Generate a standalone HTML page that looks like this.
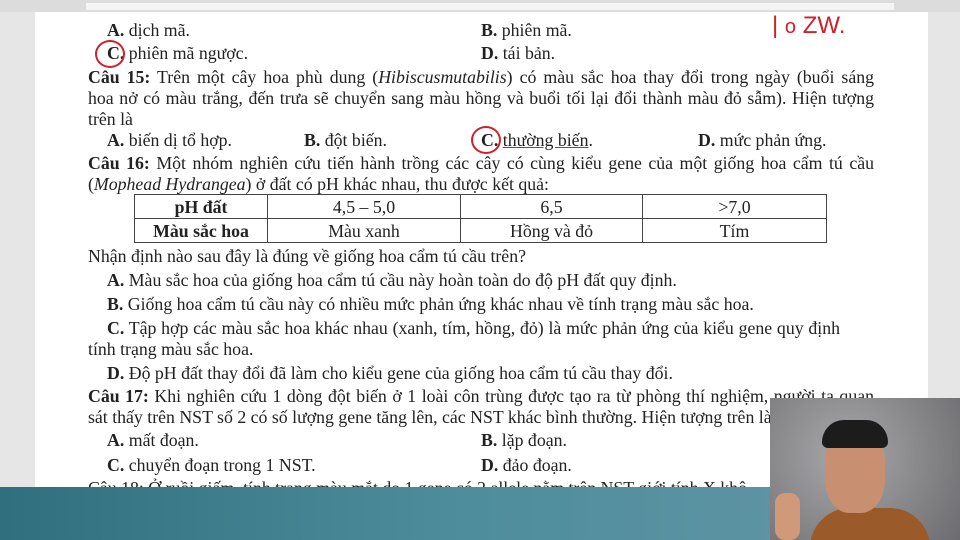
<!DOCTYPE html>
<html><head><meta charset="utf-8"><style>
html,body{margin:0;padding:0}
body{width:960px;height:540px;overflow:hidden;background:#e6e6e6;position:relative;font-family:"Liberation Serif",serif;font-size:17.8px;color:#222}
#ruler{position:absolute;left:0;top:0;width:960px;height:12px;background:#dcdcdc}
#rw{position:absolute;left:86px;top:3px;width:808px;height:7px;background:#f4f4f4}
#page{position:absolute;left:35px;top:12px;width:893px;height:528px;background:#fff}
.l{position:absolute;white-space:nowrap;line-height:20px}
.j{position:absolute;left:88px;width:786px;text-align:justify;text-align-last:justify;line-height:20px;white-space:nowrap}
b{font-weight:bold}
table{position:absolute;left:134px;top:194px;width:693px;border-collapse:collapse;font-size:17.8px}
td{border:1px solid #444;height:23px;padding:0;text-align:center;line-height:22px}
#band{position:absolute;left:0;top:487px;width:770px;height:53px;background:linear-gradient(90deg,#2f6f7e,#4d8d9c 60%,#5d93a3)}
#cam{position:absolute;left:770px;top:398px;width:190px;height:142px;background:radial-gradient(circle at 40% 40%,#a8a8aa,#6c6c70);overflow:hidden}
.red{position:absolute;border:2px solid #d0202a;border-radius:50%}
</style></head><body>
<div id="ruler"><div id="rw"></div></div>
<div id="page"></div>
<div class="l" style="left:107px;top:20px"><b>A.</b> dịch mã.</div>
<div class="l" style="left:481px;top:20px"><b>B.</b> phiên mã.</div>
<div class="l" style="left:107px;top:43px"><b>C.</b> phiên mã ngược.</div>
<div class="l" style="left:481px;top:43px"><b>D.</b> tái bản.</div>
<div class="red" style="left:95px;top:40px;width:26px;height:24px"></div>
<div class="l" style="left:772px;top:16px;color:#d0202a;font-family:'Liberation Sans',sans-serif;font-size:24px">| <span style="font-size:20px">o</span> ZW.</div>
<div class="j" style="top:67px"><b>Câu 15:</b> Trên một cây hoa phù dung (<i>Hibiscusmutabilis</i>) có màu sắc hoa thay đổi trong ngày (buổi sáng</div>
<div class="j" style="top:88px">hoa nở có màu trắng, đến trưa sẽ chuyển sang màu hồng và buổi tối lại đổi thành màu đỏ sẫm). Hiện tượng</div>
<div class="l" style="left:88px;top:109px">trên là</div>
<div class="l" style="left:107px;top:130px"><b>A.</b> biến dị tổ hợp.</div>
<div class="l" style="left:304px;top:130px"><b>B.</b> đột biến.</div>
<div class="l" style="left:481px;top:130px"><b>C.</b> <span style="text-decoration:underline;text-decoration-color:#d0202a">thường biến</span>.</div>
<div class="red" style="left:471px;top:126px;width:26px;height:24px"></div>
<div class="l" style="left:698px;top:130px"><b>D.</b> mức phản ứng.</div>
<div class="j" style="top:153px"><b>Câu 16:</b> Một nhóm nghiên cứu tiến hành trồng các cây có cùng kiểu gene của một giống hoa cẩm tú cầu</div>
<div class="l" style="left:88px;top:174px">(<i>Mophead Hydrangea</i>) ở đất có pH khác nhau, thu được kết quả:</div>
<table><tr><td style="width:132px"><b>pH đất</b></td><td style="width:192px">4,5 – 5,0</td><td style="width:181px">6,5</td><td>&gt;7,0</td></tr>
<tr><td><b>Màu sắc hoa</b></td><td>Màu xanh</td><td>Hồng và đỏ</td><td>Tím</td></tr></table>
<div class="l" style="left:88px;top:246px">Nhận định nào sau đây là đúng về giống hoa cẩm tú cầu trên?</div>
<div class="l" style="left:107px;top:270px"><b>A.</b> Màu sắc hoa của giống hoa cẩm tú cầu này hoàn toàn do độ pH đất quy định.</div>
<div class="l" style="left:107px;top:294px"><b>B.</b> Giống hoa cẩm tú cầu này có nhiều mức phản ứng khác nhau về tính trạng màu sắc hoa.</div>
<div class="l" style="left:107px;top:318px;width:733px;text-align:justify;text-align-last:justify"><b>C.</b> Tập hợp các màu sắc hoa khác nhau (xanh, tím, hồng, đỏ) là mức phản ứng của kiểu gene quy định</div>
<div class="l" style="left:88px;top:339px">tính trạng màu sắc hoa.</div>
<div class="l" style="left:107px;top:363px"><b>D.</b> Độ pH đất thay đổi đã làm cho kiểu gene của giống hoa cẩm tú cầu thay đổi.</div>
<div class="j" style="top:386px"><b>Câu 17:</b> Khi nghiên cứu 1 dòng đột biến ở 1 loài côn trùng được tạo ra từ phòng thí nghiệm, người ta quan</div>
<div class="l" style="left:88px;top:407px">sát thấy trên NST số 2 có số lượng gene tăng lên, các NST khác bình thường. Hiện tượng trên là</div>
<div class="l" style="left:107px;top:430px"><b>A.</b> mất đoạn.</div>
<div class="l" style="left:481px;top:430px"><b>B.</b> lặp đoạn.</div>
<div class="l" style="left:107px;top:455px"><b>C.</b> chuyển đoạn trong 1 NST.</div>
<div class="l" style="left:481px;top:455px"><b>D.</b> đảo đoạn.</div>
<div class="l" style="left:88px;top:478px">Câu 18: Ở ruồi giấm, tính trạng màu mắt do 1 gene có 2 allele nằm trên NST giới tính X khô</div>
<div id="band"></div>
<div id="cam">
<div style="position:absolute;left:40px;top:110px;width:120px;height:40px;background:#9a5a2a;border-radius:40px 40px 0 0"></div>
<div style="position:absolute;left:55px;top:30px;width:60px;height:85px;background:#c89070;border-radius:40%"></div>
<div style="position:absolute;left:52px;top:22px;width:66px;height:28px;background:#1c1c1c;border-radius:30px 30px 8px 8px"></div>
<div style="position:absolute;left:5px;top:95px;width:25px;height:47px;background:#d09a7a;border-radius:10px"></div>
</div>
</body></html>
